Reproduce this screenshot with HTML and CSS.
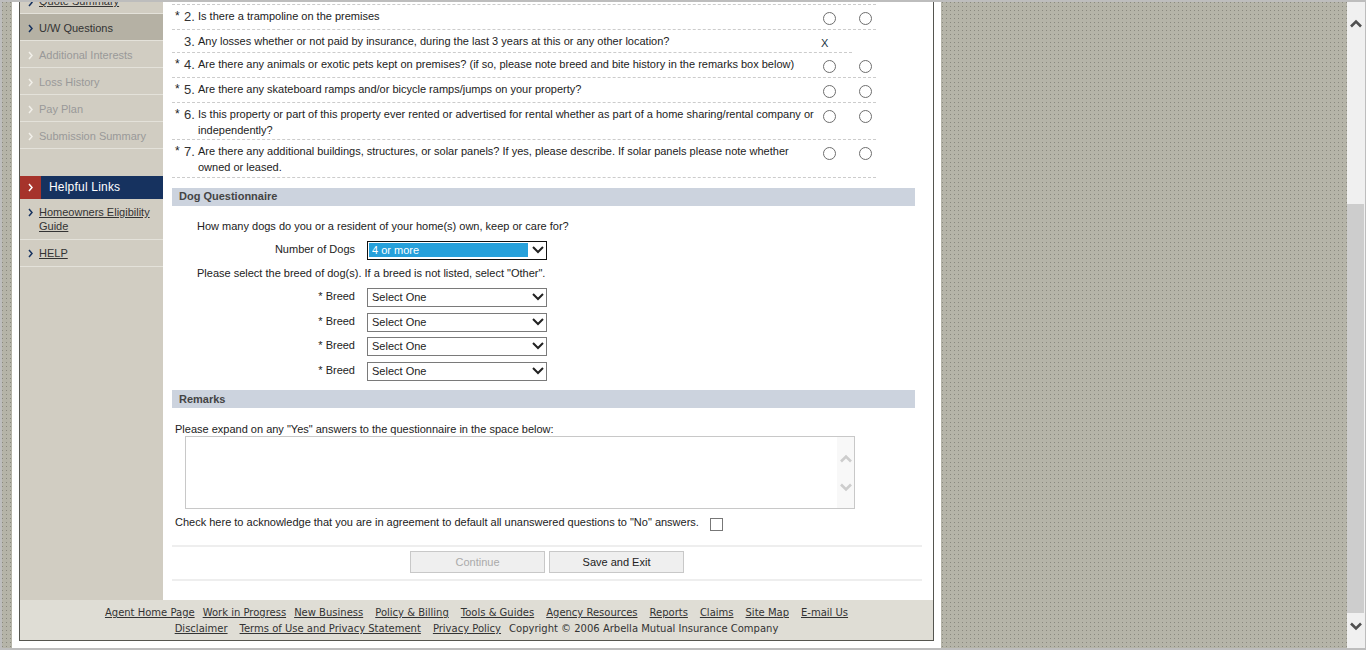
FILE: index.html
```html
<!DOCTYPE html>
<html lang="en">
<head>
  <meta charset="UTF-8" />
  <title>Arbella Mutual - U/W Questions</title>
  <link rel="stylesheet" href="styles.css">
</head>
<body>
  <svg class="defs" width="0" height="0">
    <symbol id="chev" viewBox="0 0 5 9"><path d="M1 1l3 3.5L1 8" fill="none" stroke="currentColor" stroke-width="1.5"/></symbol>
    <symbol id="down" viewBox="0 0 12 8"><path d="M1 1l5 5 5-5" fill="none" stroke="currentColor" stroke-width="2"/></symbol>
    <symbol id="bigDown" viewBox="0 0 12 9"><path d="M1 1.5l5 5 5-5" fill="none" stroke="currentColor" stroke-width="2.6"/></symbol>
    <symbol id="bigUp" viewBox="0 0 12 9"><path d="M1 7.5l5-5 5 5" fill="none" stroke="currentColor" stroke-width="2.6"/></symbol>
  </svg>

  <div class="window">
    <div class="backdrop">
      <div class="sheet">
        <div class="app">
          <div class="columns">
            <aside class="sidebar">
              <ul class="nav">
                <li class="nav-item nav-cut"><svg class="chev"><use href="#chev"/></svg><a href="#">Quote Summary</a></li>
                <li class="nav-item nav-current"><svg class="chev"><use href="#chev"/></svg>U/W Questions</li>
                <li class="nav-item nav-off"><svg class="chev"><use href="#chev"/></svg>Additional Interests</li>
                <li class="nav-item nav-off"><svg class="chev"><use href="#chev"/></svg>Loss History</li>
                <li class="nav-item nav-off"><svg class="chev"><use href="#chev"/></svg>Pay Plan</li>
                <li class="nav-item nav-off"><svg class="chev"><use href="#chev"/></svg>Submission Summary</li>
              </ul>
              <div class="help-head">
                <span class="help-mark"><svg class="chev"><use href="#chev"/></svg></span>
                <span class="help-title">Helpful Links</span>
              </div>
              <ul class="nav">
                <li class="nav-item nav-tall"><svg class="chev"><use href="#chev"/></svg><a href="#">Homeowners Eligibility Guide</a></li>
                <li class="nav-item"><svg class="chev"><use href="#chev"/></svg><a href="#">HELP</a></li>
              </ul>
            </aside>

            <main class="content">
              <div class="questions">
                <div class="q">
                  <span class="star">*</span><span class="num">2.</span>
                  <span class="q-text">Is there a trampoline on the premises</span>
                  <input class="radio" type="radio" name="q2"><input class="radio" type="radio" name="q2">
                </div>
                <div class="q q-short">
                  <span class="star"></span><span class="num">3.</span>
                  <span class="q-text">Any losses whether or not paid by insurance, during the last 3 years at this or any other location?</span>
                  <span class="mark-x">X</span>
                </div>
                <div class="q">
                  <span class="star">*</span><span class="num">4.</span>
                  <span class="q-text">Are there any animals or exotic pets kept on premises? (if so, please note breed and bite history in the remarks box below)</span>
                  <input class="radio" type="radio" name="q4"><input class="radio" type="radio" name="q4">
                </div>
                <div class="q">
                  <span class="star">*</span><span class="num">5.</span>
                  <span class="q-text">Are there any skateboard ramps and/or bicycle ramps/jumps on your property?</span>
                  <input class="radio" type="radio" name="q5"><input class="radio" type="radio" name="q5">
                </div>
                <div class="q q-two">
                  <span class="star">*</span><span class="num">6.</span>
                  <span class="q-text">Is this property or part of this property ever rented or advertised for rental whether as part of a home sharing/rental company or independently?</span>
                  <input class="radio" type="radio" name="q6"><input class="radio" type="radio" name="q6">
                </div>
                <div class="q q-two q-last">
                  <span class="star">*</span><span class="num">7.</span>
                  <span class="q-text">Are there any additional buildings, structures, or solar panels? If yes, please describe. If solar panels please note whether owned or leased.</span>
                  <input class="radio" type="radio" name="q7"><input class="radio" type="radio" name="q7">
                </div>
              </div>

              <h3 class="section-head">Dog Questionnaire</h3>
              <p class="prompt prompt-first">How many dogs do you or a resident of your home(s) own, keep or care for?</p>
              <div class="field field-count">
                <label class="field-label">Number of Dogs</label>
                <div class="select-wrap">
                  <select class="select select-picked"><option>4 or more</option></select>
                  <svg class="select-arrow"><use href="#down"/></svg>
                </div>
              </div>
              <p class="prompt prompt-breed">Please select the breed of dog(s). If a breed is not listed, select "Other".</p>
              <div class="breeds">
                <div class="field">
                  <label class="field-label">* Breed</label>
                  <div class="select-wrap"><select class="select"><option>Select One</option></select><svg class="select-arrow"><use href="#down"/></svg></div>
                </div>
                <div class="field">
                  <label class="field-label">* Breed</label>
                  <div class="select-wrap"><select class="select"><option>Select One</option></select><svg class="select-arrow"><use href="#down"/></svg></div>
                </div>
                <div class="field">
                  <label class="field-label">* Breed</label>
                  <div class="select-wrap"><select class="select"><option>Select One</option></select><svg class="select-arrow"><use href="#down"/></svg></div>
                </div>
                <div class="field">
                  <label class="field-label">* Breed</label>
                  <div class="select-wrap"><select class="select"><option>Select One</option></select><svg class="select-arrow"><use href="#down"/></svg></div>
                </div>
              </div>

              <h3 class="section-head section-remarks">Remarks</h3>
              <p class="remarks-note">Please expand on any "Yes" answers to the questionnaire in the space below:</p>
              <div class="remarks-box">
                <textarea class="remarks-input"></textarea>
                <div class="remarks-scroll">
                  <svg class="remarks-arrow"><use href="#bigUp"/></svg>
                  <svg class="remarks-arrow"><use href="#bigDown"/></svg>
                </div>
              </div>
              <div class="agree">
                <span>Check here to acknowledge that you are in agreement to default all unanswered questions to "No" answers.</span>
                <input class="check" type="checkbox">
              </div>
              <div class="actions">
                <button class="btn" disabled>Continue</button>
                <button class="btn">Save and Exit</button>
              </div>
            </main>
          </div>

          <footer class="footer">
            <div class="footer-row">
              <a href="#">Agent Home Page</a><a class="tight" href="#">Work in Progress</a><a class="tight" href="#">New Business</a><a href="#">Policy &amp; Billing</a><a href="#">Tools &amp; Guides</a><a href="#">Agency Resources</a><a href="#">Reports</a><a href="#">Claims</a><a href="#">Site Map</a><a href="#">E-mail Us</a>
            </div>
            <div class="footer-row">
              <a href="#">Disclaimer</a><a href="#">Terms of Use and Privacy Statement</a><a href="#">Privacy Policy</a><span class="tight">Copyright © 2006 Arbella Mutual Insurance Company</span>
            </div>
          </footer>
        </div>
      </div>
    </div>

    <div class="scrollbar">
      <svg class="scroll-arrow"><use href="#bigUp"/></svg>
      <div class="scroll-track"><div class="scroll-thumb"></div></div>
      <svg class="scroll-arrow"><use href="#bigDown"/></svg>
    </div>
  </div>
</body>
</html>
```

FILE: styles.css
```css
* {
  box-sizing: border-box;
}

body {
  margin: 0;
  height: 650px;
  overflow: hidden;
  background-color: #fff;
  font-family: "Liberation Sans", Arial, sans-serif;
  font-size: 11px;
  color: #222;
}

a {
  color: inherit;
}

.defs {
  position: absolute;
}

.window {
  display: flex;
  height: 650px;
  padding: 2px 1px 2px 2px;
  background-color: #bdbdbd;
}

.backdrop {
  flex: 1;
  padding-left: 10px;
  background:
    linear-gradient(to right, transparent 1px, #b5b4a8 1px) 0 0 / 4px 4px,
    linear-gradient(to bottom, transparent 1px, #b5b4a8 1px) 0 0 / 4px 4px,
    #8a897f;
}

.sheet {
  width: 929px;
  height: 100%;
  padding: 0 7px;
  background-color: #fff;
}

.app {
  width: 915px;
  height: 639px;
  display: flex;
  flex-direction: column;
  border-left: 1px solid #55554f;
  border-right: 1px solid #55554f;
  border-bottom: 1px solid #55554f;
}

.columns {
  flex: 1;
  display: flex;
  min-height: 0;
}

/* left column */
.sidebar {
  width: 143px;
  background-color: #d1cdc2;
}

.nav {
  list-style: none;
  margin: 0;
  padding: 0;
}

.nav-item {
  display: flex;
  align-items: center;
  height: 27px;
  padding-left: 8px;
  border-bottom: 1px solid #e4e2da;
  line-height: 14px;
  color: #333;
}

.chev {
  flex: none;
  width: 5px;
  height: 9px;
  margin-right: 6px;
  color: #16325f;
}

.nav-cut {
  height: 12px;
  align-items: flex-end;
  overflow: hidden;
}

.nav-cut a {
  margin-bottom: 5px;
}

.nav-cut .chev {
  margin-bottom: 6px;
}

.nav-current {
  padding-top: 2px;
  background-color: #b5b1a4;
}

.nav-off {
  padding-top: 2px;
  color: #999;
}

.nav-off .chev {
  color: #f2f0ea;
}

.nav-tall {
  height: 41px;
  align-items: flex-start;
  padding-top: 6px;
}

.nav-tall .chev {
  margin-top: 3px;
}

.help-head {
  display: flex;
  height: 23px;
  margin-top: 27px;
  color: #fff;
}

.help-mark {
  display: flex;
  align-items: center;
  width: 21px;
  padding-left: 8px;
  background-color: #a6332b;
}

.help-mark .chev {
  color: #fff;
}

.help-title {
  flex: 1;
  padding-left: 8px;
  background-color: #16325f;
  font-size: 12px;
  line-height: 22px;
  letter-spacing: 0.2px;
}

/* main column */
.content {
  flex: 1;
  min-width: 0;
  padding-left: 9px;
  background-color: #fff;
}

.questions {
  width: 704px;
  margin-top: 2px;
  border-top: 1px dashed #ccc;
}

.q {
  display: flex;
  align-items: flex-start;
  height: 25px;
  padding: 3px 0 0 3px;
  border-bottom: 1px dashed #ccc;
  line-height: 16px;
}

.q-short {
  height: 23px;
  margin-right: 24px;
}

.q-two {
  height: 37px;
}

.q-last {
  height: 38px;
}

.star {
  width: 9px;
  font-size: 12px;
}

.num {
  width: 14px;
  font-size: 13px;
  padding-top: 1px;
  color: #333;
}

.q-text {
  flex: none;
  width: 625px;
}

.mark-x {
  margin-left: -2px;
  font-size: 11px;
  line-height: 18px;
  padding-top: 1px;
  color: #234;
}

.radio {
  appearance: none;
  flex: none;
  width: 13px;
  height: 13px;
  margin: 4px 23px 0 0;
  border: 1px solid #6e6e6e;
  border-radius: 50%;
  background-color: #fff;
}

.radio + .radio {
  margin-right: 0;
}

.section-head {
  width: 743px;
  height: 18px;
  margin: 10px 0 0;
  padding-left: 7px;
  background-color: #ccd3de;
  font-size: 11px;
  line-height: 17px;
  color: #444;
}

.prompt {
  margin: 0;
  padding-left: 25px;
  line-height: 16px;
}

.prompt-first {
  margin-top: 12px;
}

.prompt-breed {
  margin-top: 6px;
}

.field {
  display: flex;
  height: 18px;
}

.field-count {
  margin-top: 7px;
}

.field-label {
  width: 183px;
  text-align: right;
  line-height: 16px;
}

.breeds {
  margin-top: 7px;
}

.breeds .field:nth-child(even) {
  margin-top: 7px;
}

.breeds .field:nth-child(3) {
  margin-top: 6px;
}

.select-wrap {
  position: relative;
  width: 180px;
  height: 19px;
  margin-left: 12px;
}

.select {
  appearance: none;
  display: block;
  width: 100%;
  height: 100%;
  padding: 0 0 2px 4px;
  border: 1px solid #7a7a7a;
  border-radius: 0;
  background-color: #fff;
  font-family: inherit;
  font-size: 11px;
  color: #222;
}

.select-picked {
  border-color: #111;
  color: #fff;
  background: linear-gradient(#26a0da, #26a0da) no-repeat 1px 1px / 159px 14px, #fff;
}

.select-arrow {
  position: absolute;
  top: 5px;
  right: 3px;
  width: 12px;
  height: 8px;
  color: #222;
  pointer-events: none;
}

.section-remarks {
  margin-top: 10px;
  line-height: 19px;
}

.remarks-note {
  margin: 13px 0 0 3px;
  line-height: 16px;
}

.remarks-box {
  position: relative;
  width: 670px;
  height: 73px;
  margin: -1px 0 0 13px;
}

.remarks-input {
  display: block;
  width: 100%;
  height: 100%;
  border: 1px solid #c8c8c8;
  border-radius: 0;
  resize: none;
  outline: none;
}

.remarks-scroll {
  position: absolute;
  top: 1px;
  right: 1px;
  bottom: 1px;
  width: 17px;
  display: flex;
  flex-direction: column;
  align-items: center;
  justify-content: space-between;
  padding: 17px 0 16px;
  background-color: #f8f8f8;
}

.remarks-arrow {
  width: 12px;
  height: 9px;
  color: #cdcdcd;
}

.agree {
  display: flex;
  align-items: flex-start;
  margin: 5px 0 0 3px;
  line-height: 16px;
}

.check {
  appearance: none;
  width: 13px;
  height: 13px;
  margin: 4px 0 0 11px;
  border: 1px solid #777;
  background-color: #fff;
}

.actions {
  display: flex;
  justify-content: center;
  gap: 4px;
  width: 750px;
  height: 36px;
  margin-top: 14px;
  padding-top: 4px;
  border-top: 2px solid #eee;
  border-bottom: 2px solid #eee;
}

.btn {
  width: 135px;
  height: 22px;
  padding: 0;
  border: 1px solid #c8c8c8;
  border-radius: 0;
  background-color: #efefef;
  font-family: inherit;
  font-size: 11px;
  color: #222;
}

.btn:disabled {
  color: #aaa;
}

/* footer */
.footer {
  height: 40px;
  padding-top: 5px;
  background-color: #dfddd5;
  font-family: "DejaVu Sans", Verdana, sans-serif;
  font-size: 10px;
  line-height: 16px;
  color: #333;
}

.footer-row {
  display: flex;
  justify-content: center;
  gap: 12px;
}

.footer-row .tight {
  margin-left: -4px;
}

/* page scrollbar */
.scrollbar {
  width: 18px;
  display: flex;
  flex-direction: column;
  align-items: center;
  background-color: #f0f0f0;
}

.scroll-arrow {
  flex: none;
  width: 12px;
  height: 9px;
  margin: 17px 0 4px;
  color: #505050;
}

.scroll-track {
  flex: 1;
  width: 100%;
  padding: 172px 1px 0 0;
}

.scroll-thumb {
  height: 100%;
  background-color: #cdcdcd;
}

.scroll-track + .scroll-arrow {
  margin: 9px 0 17px;
}
```
